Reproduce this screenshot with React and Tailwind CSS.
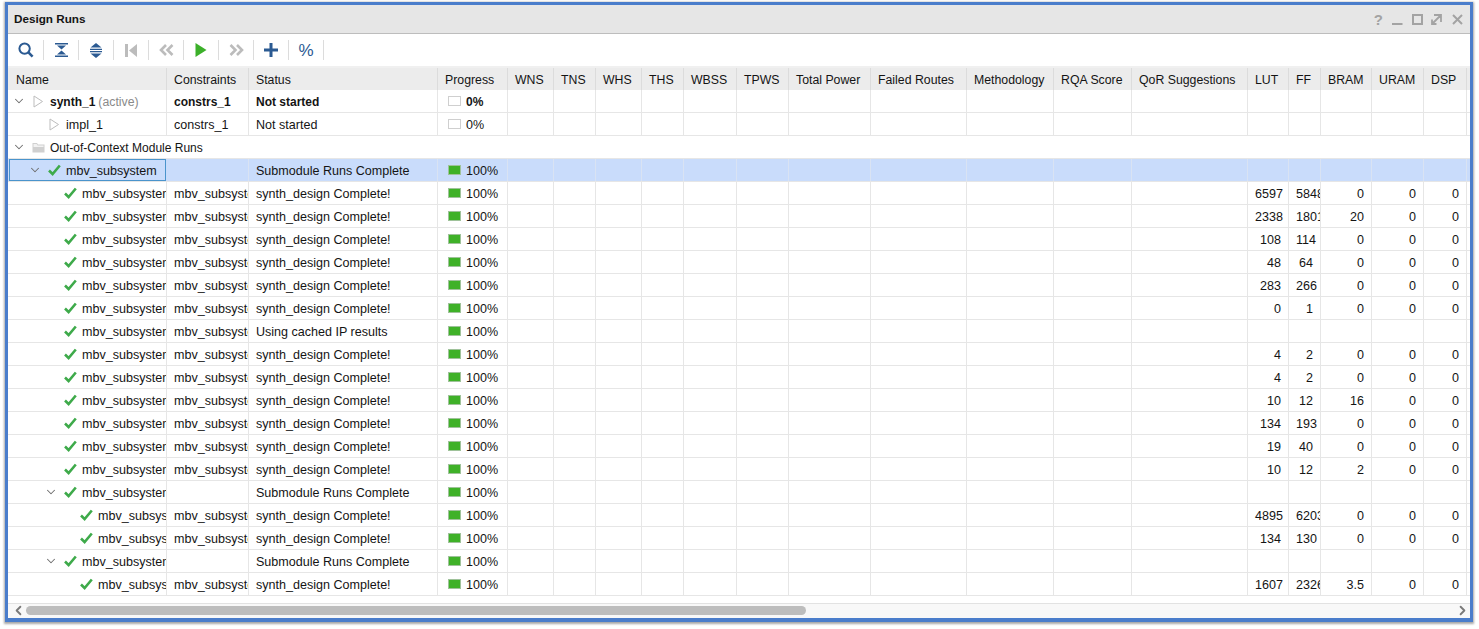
import { ChevronDown, ChevronLeft, ChevronRight } from 'lucide-react';

const GRID = 'grid grid-cols-[159px_82px_189px_70px_46px_42px_46px_42px_53px_52px_82px_96px_87px_78px_116px_41px_32px_51px_52px_43px_3px]';
const HEADERS = ['Name', 'Constraints', 'Status', 'Progress', 'WNS', 'TNS', 'WHS', 'THS', 'WBSS', 'TPWS', 'Total Power', 'Failed Routes', 'Methodology', 'RQA Score', 'QoR Suggestions', 'LUT', 'FF', 'BRAM', 'URAM', 'DSP'];
const NAME = 'mbv_subsystem_auto_ds_0_synth_1';
const CONSTRS = 'mbv_subsystem_constrs';
const DONE = 'synth_design Complete!';
const SUB = 'Submodule Runs Complete';

const RUNS = [
  { depth: 1, name: 'mbv_subsystem', status: SUB, open: true, selected: true, noConstr: true },
  { depth: 2, stats: ['6597', '58481', '0', '0', '0'] },
  { depth: 2, stats: ['2338', '18012', '20', '0', '0'] },
  { depth: 2, stats: ['108', '114', '0', '0', '0'] },
  { depth: 2, stats: ['48', '64', '0', '0', '0'] },
  { depth: 2, stats: ['283', '266', '0', '0', '0'] },
  { depth: 2, stats: ['0', '1', '0', '0', '0'] },
  { depth: 2, status: 'Using cached IP results' },
  { depth: 2, stats: ['4', '2', '0', '0', '0'] },
  { depth: 2, stats: ['4', '2', '0', '0', '0'] },
  { depth: 2, stats: ['10', '12', '16', '0', '0'] },
  { depth: 2, stats: ['134', '193', '0', '0', '0'] },
  { depth: 2, stats: ['19', '40', '0', '0', '0'] },
  { depth: 2, stats: ['10', '12', '2', '0', '0'] },
  { depth: 2, status: SUB, open: true, noConstr: true },
  { depth: 3, stats: ['4895', '62031', '0', '0', '0'] },
  { depth: 3, stats: ['134', '130', '0', '0', '0'] },
  { depth: 2, status: SUB, open: true, noConstr: true },
  { depth: 3, stats: ['1607', '23260', '3.5', '0', '0'] },
];

function Check() {
  return (
    <svg width="13" height="12" viewBox="0 0 13 12" className="shrink-0">
      <path d="M1 6.5 L4.6 10 L11.8 1.5" fill="none" stroke="#3eaa4a" strokeWidth="2.6" />
    </svg>
  );
}

function PlayOutline() {
  return (
    <svg width="11" height="13" viewBox="0 0 11 13" className="shrink-0">
      <path d="M1 1 L9.5 6.5 L1 12 Z" fill="#fff" stroke="#bdbdbd" strokeWidth="1" />
    </svg>
  );
}

function Folder() {
  return (
    <svg width="13" height="11" viewBox="0 0 13 11" className="shrink-0">
      <path d="M0.5 1 H5 L6 2.5 H12.5 V10.5 H0.5 Z" fill="#d0d0d0" />
      <path d="M1.5 2 H4.6 L5.6 3.5 H11.5 V5 H1.5 Z" fill="#f2f2f2" />
    </svg>
  );
}

function TreeName({ depth, open, icon, children }) {
  return (
    <div className="flex h-full items-center overflow-hidden whitespace-nowrap" style={{ paddingLeft: 4 + 16 * depth }}>
      <span className="flex w-[14px] shrink-0 justify-center">
        {open ? <ChevronDown size={14} strokeWidth={1.8} className="text-[#6e6e6e]" /> : null}
      </span>
      <span className="flex w-[24px] shrink-0 justify-center">{icon}</span>
      <span className="pt-[2px]">{children}</span>
    </div>
  );
}

function Progress({ done, bold }) {
  return (
    <div className="flex h-full items-center pl-[10px]">
      <span className={`h-[10px] w-[13px] shrink-0 border ${done ? 'border-[#9fc29a] bg-[#3fb128]' : 'border-[#cfcfcf] bg-white'}`} />
      <span className={`ml-[5px] pt-[2px] ${bold ? 'text-[12px] font-bold' : ''}`}>{done ? '100%' : '0%'}</span>
    </div>
  );
}

function Cell({ children, selected, right, className = '' }) {
  return (
    <div className={`h-full overflow-hidden whitespace-nowrap border-r px-[7px] leading-[24px] ${selected ? 'border-[#d9e3f3]' : 'border-[#e6e6e6]'} ${right ? 'text-right' : ''} ${className}`}>
      {children}
    </div>
  );
}

function Blanks({ count, selected }) {
  return Array.from({ length: count }, (_, i) => <Cell key={i} selected={selected} />);
}

function TableRow({ selected, children }) {
  return (
    <div className={`${GRID} h-[23px] border-b border-[#e6e6e6] ${selected ? 'bg-[#c9dcfb]' : 'bg-white'}`}>
      {children}
    </div>
  );
}

function RunRow({ run }) {
  const { depth, name = NAME, status = DONE, open, selected, noConstr, stats } = run;
  return (
    <TableRow selected={selected}>
      <div className={`h-full overflow-hidden ${selected ? 'mx-px border border-[#4a94cc]' : 'border-r border-[#e6e6e6]'}`}>
        {selected ? (
          <div className="-ml-[2px] h-full">
            <TreeName depth={depth} open={open} icon={<Check />}>{name}</TreeName>
          </div>
        ) : (
          <TreeName depth={depth} open={open} icon={<Check />}>{name}</TreeName>
        )}
      </div>
      <Cell selected={selected}>{noConstr ? '' : CONSTRS}</Cell>
      <Cell selected={selected}>{status}</Cell>
      <div className={`h-full border-r ${selected ? 'border-[#d9e3f3]' : 'border-[#e6e6e6]'}`}>
        <Progress done />
      </div>
      <Blanks count={11} selected={selected} />
      {stats ? stats.map((value, i) => <Cell key={i} right>{value}</Cell>) : <Blanks count={5} selected={selected} />}
      <div />
    </TableRow>
  );
}

function ToolButton({ children }) {
  return <div className="flex h-[20px] w-[35px] items-center justify-center border-r border-[#dcdcdc]">{children}</div>;
}

function Toolbar() {
  const navy = '#2b5a92';
  const gray = '#bcbcbc';
  return (
    <div className="flex h-[32px] items-center bg-white pl-px">
      <ToolButton>
        <svg width="16" height="16" viewBox="0 0 16 16">
          <circle cx="6.6" cy="6.6" r="5.2" fill="none" stroke={navy} strokeWidth="2" />
          <path d="M10.4 10.4 L14.6 14.6" fill="none" stroke={navy} strokeWidth="2.6" />
        </svg>
      </ToolButton>
      <ToolButton>
        <svg width="13" height="14" viewBox="0 0 13 14">
          <path d="M0 0 H13 V1.4 H0 Z M2 2.6 H11 L6.5 6.4 Z M6.5 7.6 L11 11.4 H2 Z M0 12.6 H13 V14 H0 Z" fill={navy} />
        </svg>
      </ToolButton>
      <ToolButton>
        <svg width="12" height="15" viewBox="0 0 12 15">
          <path d="M6 0 L11.5 4.6 H0.5 Z M0 5.8 H12 V6.9 H0 Z M0 8.1 H12 V9.2 H0 Z M0.5 10.4 H11.5 L6 15 Z" fill={navy} />
        </svg>
      </ToolButton>
      <ToolButton>
        <svg width="12" height="13" viewBox="0 0 12 13">
          <path d="M0 0 H3 V13 H0 Z M12 0 V13 L4 6.5 Z" fill={gray} />
        </svg>
      </ToolButton>
      <ToolButton>
        <svg width="15" height="12" viewBox="0 0 15 12">
          <path d="M7 1 L2 6 L7 11 M13.5 1 L8.5 6 L13.5 11" fill="none" stroke={gray} strokeWidth="2.6" />
        </svg>
      </ToolButton>
      <ToolButton>
        <svg width="12" height="14" viewBox="0 0 12 14">
          <path d="M0.5 0 L11.5 7 L0.5 14 Z" fill="#3cb02a" />
        </svg>
      </ToolButton>
      <ToolButton>
        <svg width="15" height="12" viewBox="0 0 15 12">
          <path d="M1.5 1 L6.5 6 L1.5 11 M8 1 L13 6 L8 11" fill="none" stroke={gray} strokeWidth="2.6" />
        </svg>
      </ToolButton>
      <ToolButton>
        <svg width="14" height="14" viewBox="0 0 14 14">
          <path d="M5.5 0 H8.5 V5.5 H14 V8.5 H8.5 V14 H5.5 V8.5 H0 V5.5 H5.5 Z" fill={navy} />
        </svg>
      </ToolButton>
      <ToolButton>
        <span className="text-[17px] font-medium leading-none text-[#2b5a92]">%</span>
      </ToolButton>
    </div>
  );
}

function WindowControls() {
  return (
    <div className="flex items-center text-[#a3a3a3]">
      <span className="mr-[9px] text-[15px] font-bold leading-none">?</span>
      <svg width="11" height="12" viewBox="0 0 11 12" className="mr-[9px]">
        <path d="M0 10 H10.5 V12 H0 Z" fill="currentColor" />
      </svg>
      <svg width="11" height="11" viewBox="0 0 11 11" className="mr-[8px]">
        <rect x="1" y="1" width="9" height="9" fill="none" stroke="currentColor" strokeWidth="2" />
      </svg>
      <svg width="11" height="11" viewBox="0 0 11 11" className="mr-[10px]">
        <path d="M3 1 H10 V8 M10 1 L1 10 M1 5.5 V10 H5.5" fill="none" stroke="currentColor" strokeWidth="1.8" />
      </svg>
      <svg width="11" height="11" viewBox="0 0 11 11">
        <path d="M1 1 L10 10 M10 1 L1 10" fill="none" stroke="currentColor" strokeWidth="2" />
      </svg>
    </div>
  );
}

export default function App() {
  return (
    <div className="min-h-screen bg-white pl-[5px] pt-[2px] font-['Liberation_Sans',Arial,sans-serif] text-[12.55px] text-[#141414]">
      <div className="w-[1468px] border-[3px] border-b-4 border-[#4a7dcb] shadow-[0_1px_2px_1px_#a8a8a8]">
        <div className="flex h-[29px] items-center justify-between border-b border-[#bdbdbd] bg-[#e6e6e6] pl-[6px] pr-[7px]">
          <span className="text-[11.7px] font-bold">Design Runs</span>
          <WindowControls />
        </div>

        <Toolbar />

        <div className="bg-[#f0f0f0] pt-[2px]">
          <div className={`${GRID} h-[22px] bg-[#ececec] text-[12.3px]`}>
            {HEADERS.map((label) => (
              <div key={label} className="overflow-hidden whitespace-nowrap border-r border-[#dcdcdc] px-[7px] leading-[25px] first:pl-[8px]">{label}</div>
            ))}
            <div />
          </div>
        </div>

        <TableRow>
          <div className="h-full border-r border-[#e6e6e6]">
            <TreeName depth={0} open icon={<PlayOutline />}>
              <span className="text-[12px] font-bold">synth_1</span>
              <span className="ml-[3px] text-[12.3px] text-[#8a8a8a]">(active)</span>
            </TreeName>
          </div>
          <Cell className="text-[12px] font-bold">constrs_1</Cell>
          <Cell className="text-[12px] font-bold">Not started</Cell>
          <div className="h-full border-r border-[#e6e6e6]"><Progress bold /></div>
          <Blanks count={16} />
          <div />
        </TableRow>

        <TableRow>
          <div className="h-full border-r border-[#e6e6e6]">
            <TreeName depth={1} icon={<PlayOutline />}>impl_1</TreeName>
          </div>
          <Cell>constrs_1</Cell>
          <Cell>Not started</Cell>
          <div className="h-full border-r border-[#e6e6e6]"><Progress /></div>
          <Blanks count={16} />
          <div />
        </TableRow>

        <div className="h-[23px] border-b border-[#e6e6e6] bg-white text-[12px]">
          <TreeName depth={0} open icon={<Folder />}>Out-of-Context Module Runs</TreeName>
        </div>

        {RUNS.map((run, i) => <RunRow key={i} run={run} />)}

        <div className="h-[7px] bg-white" />
        <div className="flex h-[15px] items-center border-t border-[#e2e2e2] bg-[#f8f8f8] pb-[2px]">
          <ChevronLeft size={15} strokeWidth={3} className="ml-[3px] text-[#7a7a7a]" />
          <div className="h-[9px] w-[780px] rounded-full bg-[#bdbdbd]" />
          <ChevronRight size={15} strokeWidth={3} className="ml-auto text-[#7a7a7a]" />
        </div>
      </div>
    </div>
  );
}
